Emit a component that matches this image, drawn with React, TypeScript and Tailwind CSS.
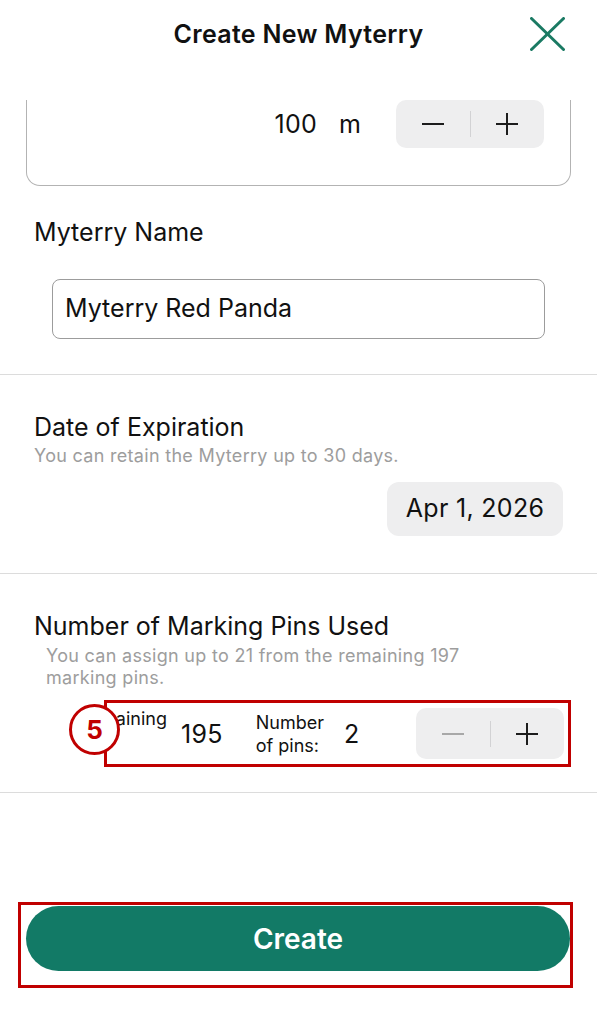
import React from "react";

function Stepper({ minusDisabled = false }: { minusDisabled?: boolean }) {
  return (
    <div className="flex h-full w-[148px] items-center rounded-[10px] bg-[#eeeeef]">
      <div className="flex flex-1 items-center justify-center">
        <svg width="22" height="22" viewBox="0 0 22 22">
          <line x1="0" y1="11" x2="22" y2="11" stroke={minusDisabled ? "#a8a8a8" : "#1c1c1c"} strokeWidth="2" />
        </svg>
      </div>
      <div className="h-[26px] w-px bg-[#d2d2d4]" />
      <div className="flex flex-1 items-center justify-center">
        <svg width="22" height="22" viewBox="0 0 22 22">
          <line x1="0" y1="11" x2="22" y2="11" stroke="#1c1c1c" strokeWidth="2" />
          <line x1="11" y1="0" x2="11" y2="22" stroke="#1c1c1c" strokeWidth="2" />
        </svg>
      </div>
    </div>
  );
}

export default function App() {
  return (
    <div className="relative h-[1024px] w-[597px] overflow-hidden bg-white font-['Inter',sans-serif] text-[#111]">
      {/* header */}
      <div className="grid h-[100px] grid-cols-[1fr_auto_1fr] items-start">
        <div />
        <h1 className="pt-[18px] text-[25px] font-semibold leading-[32px] tracking-[0.3px]">Create New Myterry</h1>
        <div className="flex justify-end pr-[32px] pt-[17px]">
          <svg width="35" height="34" viewBox="0 0 35 34">
            <line x1="1.5" y1="1.5" x2="33.5" y2="32.5" stroke="#1a7a63" strokeWidth="3" strokeLinecap="round" />
            <line x1="33.5" y1="1.5" x2="1.5" y2="32.5" stroke="#1a7a63" strokeWidth="3" strokeLinecap="round" />
          </svg>
        </div>
      </div>

      {/* radius card (scrolled under the header) */}
      <div className="mx-[26px] flex h-[86px] items-start justify-end rounded-b-[14px] border-x-[1.5px] border-b-[1.5px] border-[#b3b3b3] pr-[26px]">
        <div className="flex h-[48px] items-center">
          <span className="text-[25px] leading-[30px] tracking-[0.3px]">100</span>
          <span className="ml-[22px] text-[25px] leading-[30px]">m</span>
          <div className="ml-[35px] h-[48px]">
            <Stepper />
          </div>
        </div>
      </div>

      {/* name */}
      <div className="border-b border-[#dcdcdc] px-[34px] pb-[35px] pt-[31px]">
        <div className="text-[25px] leading-[30px]">Myterry Name</div>
        <div className="ml-[18px] mt-[32px] flex h-[60px] w-[493px] items-center rounded-[8px] border-[1.5px] border-[#9c9c9c] pl-[12px] text-[25px]">
          Myterry Red Panda
        </div>
      </div>

      {/* expiration */}
      <div className="flex flex-col border-b border-[#dcdcdc] px-[34px] pb-[37px] pt-[37px]">
        <div className="text-[25px] leading-[30px]">Date of Expiration</div>
        <div className="mt-[4px] text-[18px] leading-[20px] tracking-[0.3px] text-[#9d9d9d]">You can retain the Myterry up to 30 days.</div>
        <div className="mt-[16px] flex h-[54px] w-[176px] items-center justify-center self-end rounded-[12px] bg-[#eeeeef] text-[25px] tracking-[0.3px]">
          Apr 1, 2026
        </div>
      </div>

      {/* pins */}
      <div className="border-b border-[#dcdcdc] pb-[25px] pl-[34px] pr-[26px] pt-[37px]">
        <div className="text-[25px] leading-[30px]">Number of Marking Pins Used</div>
        <div className="mt-[4px] w-[452px] pl-[12px] text-[18px] leading-[22px] tracking-[0.3px] text-[#9d9d9d]">
          You can assign up to 21 from the remaining 197 marking pins.
        </div>
        <div className="relative ml-[70px] mt-[11px] flex h-[67px] items-center border-[3px] border-[#c00000] pr-[4px]">
          <div className="flex w-[60px] self-start justify-end overflow-hidden pt-[5px]">
            <span className="whitespace-nowrap text-[18px] leading-[22px]">Remaining</span>
          </div>
          <span className="ml-[14px] text-[25px] leading-[30px] tracking-[0.3px]">195</span>
          <div className="ml-[33px] text-[18px] leading-[23px]">
            Number
            <br />
            of pins:
          </div>
          <span className="ml-[20px] text-[25px] leading-[30px]">2</span>
          <div className="ml-auto h-[51px]">
            <Stepper minusDisabled />
          </div>
          <div className="absolute left-[-38px] top-[1px] flex h-[51px] w-[51px] items-center justify-center rounded-full border-[3px] border-[#c00000] bg-white text-[26px] font-bold text-[#c00000]">
            5
          </div>
        </div>
      </div>

      {/* create */}
      <div className="ml-[18px] mt-[109px] w-[555px] border-[3px] border-[#c00000] pb-[14px] pl-[5px] pt-[1px]">
        <button className="flex h-[65px] w-full items-center justify-center rounded-full bg-[#127a66] text-[28px] font-semibold text-white">
          Create
        </button>
      </div>
    </div>
  );
}
